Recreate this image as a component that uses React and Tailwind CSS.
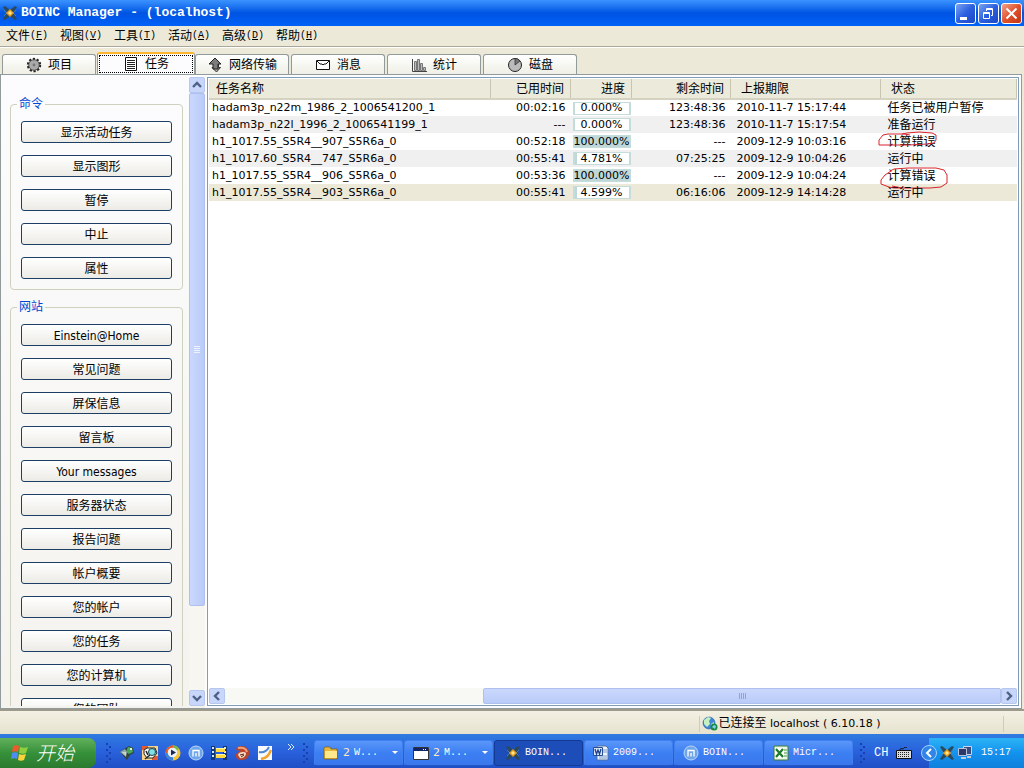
const menus = [
  ['文件', 'F'],
  ['视图', 'V'],
  ['工具', 'T'],
  ['活动', 'A'],
  ['高级', 'D'],
  ['帮助', 'H'],
]

const commands = ['显示活动任务', '显示图形', '暂停', '中止', '属性']

const websites = [
  'Einstein@Home',
  '常见问题',
  '屏保信息',
  '留言板',
  'Your messages',
  '服务器状态',
  '报告问题',
  '帐户概要',
  '您的帐户',
  '您的任务',
  '您的计算机',
  '您的团队',
]

const tasks = [
  { name: 'hadam3p_n22m_1986_2_1006541200_1', elapsed: '00:02:16', progress: '0.000%', left: '123:48:36', deadline: '2010-11-7 15:17:44', status: '任务已被用户暂停' },
  { name: 'hadam3p_n22l_1996_2_1006541199_1', elapsed: '---', progress: '0.000%', left: '123:48:36', deadline: '2010-11-7 15:17:54', status: '准备运行' },
  { name: 'h1_1017.55_S5R4__907_S5R6a_0', elapsed: '00:52:18', progress: '100.000%', left: '---', deadline: '2009-12-9 10:03:16', status: '计算错误', mark: 'first' },
  { name: 'h1_1017.60_S5R4__747_S5R6a_0', elapsed: '00:55:41', progress: '4.781%', left: '07:25:25', deadline: '2009-12-9 10:04:26', status: '运行中' },
  { name: 'h1_1017.55_S5R4__906_S5R6a_0', elapsed: '00:53:36', progress: '100.000%', left: '---', deadline: '2009-12-9 10:04:24', status: '计算错误', mark: 'second' },
  { name: 'h1_1017.55_S5R4__903_S5R6a_0', elapsed: '00:55:41', progress: '4.599%', left: '06:16:06', deadline: '2009-12-9 14:14:28', status: '运行中', selected: true },
]

function BoincIcon({ className = '' }) {
  return (
    <svg viewBox="0 0 16 16" className={`h-4 w-4 shrink-0 ${className}`} aria-hidden="true">
      <path d="M1 2l2-1 5 4 5-4 2 1-4 6 4 6-2 1-5-4-5 4-2-1 4-6z" fill="#2b4a5e" />
      <path d="M2 5l3 3-3 3M14 5l-3 3 3 3" fill="none" stroke="#4e7ca6" />
      <path d="M8 4l4 4-4 4-4-4z" fill="#e49a1c" />
      <path d="M8 6l2 2-2 2-2-2z" fill="#ffe88a" />
    </svg>
  )
}

function GearIcon() {
  return (
    <svg viewBox="0 0 16 16" className="h-4 w-4" aria-hidden="true">
      <circle cx="8" cy="8" r="6.2" fill="none" stroke="#222" strokeWidth="2" strokeDasharray="2.2 1.7" />
      <circle cx="8" cy="8" r="5.3" fill="#aaa" stroke="#333" strokeWidth="0.8" />
      <circle cx="8" cy="8" r="1.4" fill="#777" />
    </svg>
  )
}

function ListIcon() {
  return (
    <svg viewBox="0 0 16 16" className="h-4 w-4" aria-hidden="true">
      <path d="M2.5 1.5h11v13h-11z" fill="#fff" stroke="#111" />
      <path d="M4 4.5h8M4 6.5h8M4 8.5h8M4 10.5h8M4 12.5h8" stroke="#222" />
    </svg>
  )
}

function TransferIcon() {
  return (
    <svg viewBox="0 0 16 16" className="h-4 w-4" aria-hidden="true">
      <path d="M6.5 4.500h5v6h2L9.500 15 5 10.500h1.500z" fill="#b5b5b5" stroke="#333" />
      <path d="M8 1l6 6h-3v5H6V7H2z" fill="#7c7c7c" stroke="#222" />
    </svg>
  )
}

function MailIcon() {
  return (
    <svg viewBox="0 0 16 16" className="h-4 w-4" aria-hidden="true">
      <path d="M1.500 3.500h13v9h-13z" fill="#fff" stroke="#111" />
      <path d="M2 4l3 3h2l1 1 1-1h2l3-3" fill="none" stroke="#111" />
    </svg>
  )
}

function ChartIcon() {
  return (
    <svg viewBox="0 0 16 16" className="h-4 w-4" aria-hidden="true">
      <path d="M3.500 4.500h2v9h-2zM6.500 2.500h2v11h-2zM9.500 6.500h2v7h-2zM12.500 10.500h2v3h-2z" fill="#bbb" stroke="#777" />
      <path d="M1.500 2v12.500H16" fill="none" stroke="#444" />
    </svg>
  )
}

function DiskIcon() {
  return (
    <svg viewBox="0 0 16 16" className="h-4 w-4" aria-hidden="true">
      <circle cx="8" cy="8" r="6.500" fill="#bbb" stroke="#222" />
      <path d="M8 8V1.500a6.500 6.500 0 015 2.500z" fill="#777" stroke="#333" strokeWidth="0.8" />
    </svg>
  )
}

const tabs = [
  { label: '项目', Icon: GearIcon },
  { label: '任务', Icon: ListIcon, active: true },
  { label: '网络传输', Icon: TransferIcon },
  { label: '消息', Icon: MailIcon },
  { label: '统计', Icon: ChartIcon },
  { label: '磁盘', Icon: DiskIcon },
]

function TitleBar() {
  const base = 'grid h-[21px] w-[21px] place-items-center rounded-[3px] border border-white'
  return (
    <header className="flex h-[26px] shrink-0 items-center bg-linear-to-b from-[#3a93ff] via-[#0054e3] to-[#0061f8] px-0.5">
      <BoincIcon />
      <h1 className="ml-[3px] flex-1 truncate font-['Liberation_Mono','Noto_Sans_CJK_SC',monospace] text-[13px] font-bold text-white">
        BOINC Manager - (localhost)
      </h1>
      <div className="flex gap-[2px]">
        <button aria-label="最小化" className={`${base} bg-linear-to-br from-[#7ba2f0] via-[#2c5fe0] to-[#1c47c4]`}>
          <svg viewBox="0 0 19 19" className="h-[19px] w-[19px]"><path d="M4 13h7v3H4z" fill="#fff" /></svg>
        </button>
        <button aria-label="还原" className={`${base} bg-linear-to-br from-[#7ba2f0] via-[#2c5fe0] to-[#1c47c4]`}>
          <svg viewBox="0 0 19 19" className="h-[19px] w-[19px]" fill="none" stroke="#fff">
            <path d="M4.500 8.500h6v6h-6zM4 9.500h7M7.500 7V4.500h6v7H12M7 5.500h7" />
          </svg>
        </button>
        <button aria-label="关闭" className={`${base} bg-linear-to-br from-[#f0a088] via-[#e0512c] to-[#c3330f]`}>
          <svg viewBox="0 0 19 19" className="h-[19px] w-[19px]" stroke="#fff" strokeWidth="2"><path d="M4.500 4.500l10 10M14.500 4.500l-10 10" /></svg>
        </button>
      </div>
    </header>
  )
}

function MenuBar() {
  return (
    <nav className="flex h-[21px] shrink-0 items-center gap-3 border-b border-[#aca899] bg-[#ece9d8] pl-1.5">
      {menus.map(([label, key]) => (
        <button key={key} className="flex w-[42px] items-center whitespace-nowrap">
          {label}
          <span className="font-['Liberation_Mono',monospace] text-[10px]">
            (<u>{key}</u>)
          </span>
        </button>
      ))}
    </nav>
  )
}

function TabBar() {
  return (
    <div role="tablist" className="flex h-[27px] shrink-0 items-end border-t border-white bg-[#ece9d8] pl-0.5">
      {tabs.map(({ label, Icon, active }) =>
        active ? (
          <button key={label} role="tab" aria-selected="true" className="h-[22px] w-[98px] rounded-t-[3px] border-x border-t-2 border-x-[#919b9c] border-t-[#ffb732] bg-[#fcfcfe] px-px">
            <span className="flex h-[18px] items-center justify-center gap-1.5 border border-dotted border-black">
              <Icon />
              {label}
            </span>
          </button>
        ) : (
          <button key={label} role="tab" aria-selected="false" className="mr-0.5 flex h-5 w-[94px] items-center justify-center gap-1.5 rounded-t-[3px] border border-b-0 border-[#919b9c] bg-linear-to-b from-white to-[#efefe6] first:mr-px">
            <Icon />
            {label}
          </button>
        ),
      )}
    </div>
  )
}

function ActionGroup({ title, items }) {
  return (
    <fieldset className="rounded-[4px] border border-[#d0d0bf] px-2.5 pb-2.5">
      <legend className="-ml-1 h-3 text-[12px] leading-3 text-[#0046d5]">
        <span className="px-0.5">{title}</span>
      </legend>
      <div className="flex flex-col gap-3 pt-[11px]">
        {items.map((item) => (
          <button key={item} className="h-[22px] rounded-[3px] border border-[#1d3f66] bg-linear-to-b from-white to-[#ecebe6] pt-px text-center leading-5">
            {item}
          </button>
        ))}
      </div>
    </fieldset>
  )
}

function ScrollButton({ label, path }) {
  return (
    <button aria-label={label} className="grid h-4 w-4 shrink-0 place-items-center rounded-[2px] border border-[#b5c7ee] bg-[#c8d6fb]">
      <svg viewBox="0 0 12 12" className="h-3 w-3" fill="none" stroke="#4d6185" strokeWidth="2.4">
        <path d={path} />
      </svg>
    </button>
  )
}

function Sidebar() {
  return (
    <aside className="flex w-[204px] shrink-0 bg-linear-to-b from-[#fcfcfe] to-[#f4f3ee] py-0.5">
      <div className="flex min-h-0 flex-1 flex-col gap-[11px] overflow-hidden pt-[21px] pr-1.5 pl-[9px]">
        <ActionGroup title="命令" items={commands} />
        <ActionGroup title="网站" items={websites} />
      </div>
      <div className="flex w-4 flex-col bg-[#f7f6f1]">
        <ScrollButton label="向上滚动" path="M2 8l4-4 4 4" />
        <div className="flex flex-[513] flex-col items-center justify-center gap-px rounded-[2px] border border-[#aebff0] bg-linear-to-r from-[#cbd8fd] to-[#b9cbf8]">
          {[0, 1, 2, 3].map((n) => (
            <span key={n} className="h-px w-1.5 bg-[#eef4fe]" />
          ))}
        </div>
        <div className="flex-[84]" />
        <ScrollButton label="向下滚动" path="M2 4l4 4 4-4" />
      </div>
    </aside>
  )
}

function Mark({ kind }) {
  if (kind === 'first') {
    return (
      <svg viewBox="0 0 62 18" className="absolute -top-0.5 -left-1 h-[18px] w-[62px]" fill="none" stroke="#d8232a">
        <path d="M33 4L27 3H11L6 4L2 9V14H32L50 13L57 12L59 9V4L55 2L42 1L30 2L25 3" />
      </svg>
    )
  }
  return (
    <svg viewBox="0 0 70 24" className="absolute top-0 -left-px h-6 w-[70px]" fill="none" stroke="#d8232a">
      <path d="M11 4L5 8L1 13V17L9 20L14 21H50L61 20L67 16V8L64 3L56 1H28L14 2L10 4M12 19L22 21" />
    </svg>
  )
}

function Progress({ value }) {
  return (
    <div className="relative mr-px ml-0.5 h-[13px] border border-x-2 border-[#c5dcdc] bg-white">
      <div className="h-full bg-[#bfd7d7]" style={{ width: value }} />
      <span className="absolute -inset-x-1 inset-y-0 flex items-center justify-center">{value}</span>
    </div>
  )
}

function TaskTable() {
  const divider = 'border-r border-[#c7c5b2]'
  return (
    <table className="w-full table-fixed border-collapse whitespace-nowrap">
      <colgroup>
        <col />
        <col className="w-[80px]" />
        <col className="w-[61px]" />
        <col className="w-[99px]" />
        <col className="w-[150px]" />
        <col className="w-[136px]" />
      </colgroup>
      <thead>
        <tr className="h-5 border-b-2 border-[#d6d2c2] bg-[#ebeadb] text-left">
          <th className={`${divider} pl-[7px] font-normal`}>任务名称</th>
          <th className={`${divider} pr-1.5 text-right font-normal`}>已用时间</th>
          <th className={`${divider} pr-1.5 text-right font-normal`}>进度</th>
          <th className={`${divider} pr-1.5 text-right font-normal`}>剩余时间</th>
          <th className={`${divider} pl-2.5 font-normal`}>上报期限</th>
          <th className={`${divider} pl-2.5 font-normal`}>状态</th>
        </tr>
      </thead>
      <tbody className="font-['DejaVu_Sans','Noto_Sans_CJK_SC',sans-serif] text-[11px]">
        {tasks.map((task) => (
          <tr key={task.name} className={`h-[17px] ${task.selected ? 'bg-[#ece9d8]' : 'odd:bg-white even:bg-[#f0f0f0]'}`}>
            <td className="pl-[3px]">{task.name}</td>
            <td className="pr-[5px] text-right">{task.elapsed}</td>
            <td><Progress value={task.progress} /></td>
            <td className="pr-[5px] text-right">{task.left}</td>
            <td className="pl-1.5">{task.deadline}</td>
            <td className="relative pl-[7px] text-[12px]">
              {task.status}
              {task.mark && <Mark kind={task.mark} />}
            </td>
          </tr>
        ))}
      </tbody>
    </table>
  )
}

function TaskList() {
  return (
    <main className="m-0.5 flex min-w-0 flex-1 flex-col border border-[#7f9db9] bg-white p-px">
      <div className="min-h-0 flex-1 overflow-hidden">
        <TaskTable />
      </div>
      <div className="flex h-4 shrink-0 bg-[#f8f8f4]">
        <ScrollButton label="向左滚动" path="M8 2L4 6l4 4" />
        <div className="flex-[258]" />
        <div className="flex flex-[516] items-center justify-center gap-px rounded-[2px] border border-[#aebff0] bg-linear-to-b from-[#cbd8fd] to-[#b9cbf8]">
          {[0, 1, 2, 3].map((n) => (
            <span key={n} className="h-1.5 w-px bg-[#8ca4dc]" />
          ))}
        </div>
        <ScrollButton label="向右滚动" path="M4 2l4 4-4 4" />
      </div>
    </main>
  )
}

function StatusBar() {
  return (
    <footer className="flex h-[25px] shrink-0 items-center border-t-2 border-[#9d9a8c] bg-linear-to-b from-[#f3f1e4] to-[#e6e2cf] pt-0.5">
      <div className="flex-[700]" />
      <div className="flex h-4 flex-[302] items-center border-l border-[#d0ccba] pl-0.5">
        <svg viewBox="0 0 16 16" className="h-4 w-4" aria-hidden="true">
          <circle cx="7" cy="7" r="6" fill="#3f86d8" stroke="#1e5aa0" strokeWidth="0.6" />
          <path d="M2 4l4-3 3 1-2 3 1 3-3 3-3-3zM9 8l3-2v4l-3 2z" fill="#c5f0c0" />
          <circle cx="12" cy="11" r="3.500" fill="#1d8a3a" />
          <path d="M10 11l2-2 2 1-1 3z" fill="#7fd0ff" />
        </svg>
        <p className="pl-px">
          已连接至 <span className="font-['DejaVu_Sans',sans-serif] text-[11px]">localhost ( 6.10.18 )</span>
        </p>
      </div>
      <div className="h-4 w-[21px] border-l border-[#d0ccba]" />
    </footer>
  )
}

function MIcon() {
  return (
    <svg viewBox="0 0 16 16" className="h-4 w-4 shrink-0" aria-hidden="true">
      <circle cx="8" cy="8" r="7" fill="#6fa6ea" stroke="#b9d6fa" />
      <path d="M5 11.500V5.500h6v6M8 8v3.500" fill="none" stroke="#fff" strokeWidth="1.300" />
    </svg>
  )
}

const launchers = [
  {
    label: '显示桌面',
    art: (
      <>
        <path d="M1 7l4-3 5-3 4 2 1 5-4 2-3 5-3-3z" fill="#31463f" />
        <path d="M9 2l4 1 1 4-4 2-3-2z" fill="#4aa85c" />
        <path d="M1 7l5-3 2 3-1 5z" fill="#93aaaa" />
        <path d="M3 7l4 0 0 4z" fill="#c9d6d4" />
        <path d="M11 3h2v2h-2z" fill="#d9ffe0" />
      </>
    ),
  },
  {
    label: '图片查看器',
    art: (
      <>
        <path d="M0 1h16v14H0z" fill="#f7d489" />
        <path d="M0 1h6v4H0zM10 11h6v4h-6z" fill="#e05a32" />
        <path d="M2 5l3-2 8 0 2 5-4 5-6 0-3-4z" fill="#f7faf4" stroke="#222" />
        <circle cx="10" cy="7" r="3.500" fill="#7fe0e8" stroke="#1d4550" />
        <path d="M4 6l2 4M8 10l-5 4" stroke="#222" strokeWidth="1.500" />
      </>
    ),
  },
  {
    label: '媒体播放器',
    art: (
      <>
        <circle cx="8" cy="8" r="7.500" fill="#f7c531" />
        <path d="M8 .5A7.500 7.500 0 00.5 8H8z" fill="#e2582b" />
        <path d="M8 15.500A7.500 7.500 0 01.5 8H8z" fill="#3a84de" />
        <path d="M8 .5a7.500 7.500 0 016 3.500L8 8z" fill="#77bd45" />
        <circle cx="7.500" cy="7.500" r="4.800" fill="#eef3fb" />
        <path d="M6 4.500l5 3-5 3z" fill="#1a2b50" />
      </>
    ),
  },
  {
    label: '傲游',
    art: (
      <>
        <circle cx="8" cy="8" r="7" fill="#6fa6ea" stroke="#b9d6fa" />
        <path d="M5 11.500V5.500h6v6M8 8v3.500" fill="none" stroke="#fff" strokeWidth="1.300" />
      </>
    ),
  },
  {
    label: '影音',
    art: (
      <>
        <path d="M0 1h4v14H0zM12 1h4v14h-4z" fill="#10377c" />
        <path d="M1 2h2v2H1zM1 6h2v2H1zM1 10h2v2H1zM13 2h2v2h-2zM13 6h2v2h-2zM13 10h2v2h-2z" fill="#cfe7ff" />
        <path d="M5 3h9v4H5zM5 9h9v4H5z" fill="#ffd83d" />
        <path d="M5 3h9v1H5zM5 9h9v1H5z" fill="#fff6a8" />
      </>
    ),
  },
  {
    label: '刻录',
    art: (
      <>
        <path d="M3 2c5-2 10-1 12 4 1 5-2 9-7 9-4 0-7-2-6-6l4-3-4-1z" fill="#b9452d" />
        <path d="M4 10c0-3 6-4 8-2 0 3-3 6-6 5z" fill="#f6dcc2" />
        <path d="M4 3c4-1 8 0 9 4" fill="none" stroke="#f2a277" strokeWidth="2" />
        <path d="M6 10l4-1M7 12l3-2" stroke="#5c2017" />
      </>
    ),
  },
  {
    label: '编辑器',
    art: (
      <>
        <path d="M1 1h14v14H1z" fill="#f8fafc" />
        <path d="M2 7c5 1 8-1 10-5" fill="none" stroke="#4e87cf" strokeWidth="2" />
        <path d="M4 14c6-1 8-4 10-9" fill="none" stroke="#f1a32c" strokeWidth="2.500" />
      </>
    ),
  },
]

function FolderIcon() {
  return (
    <svg viewBox="0 0 16 16" className="h-4 w-4 shrink-0" aria-hidden="true">
      <path d="M1 3l1-1h5l1 2h6v10H1z" fill="#e7b83c" stroke="#7c5a10" strokeWidth="0.7" />
      <path d="M2 6h12v7H2z" fill="#ffe88c" />
    </svg>
  )
}

function WindowIcon() {
  return (
    <svg viewBox="0 0 16 16" className="h-4 w-4 shrink-0" aria-hidden="true">
      <path d="M.5 2.500h15v12H.5z" fill="#fff" stroke="#333" />
      <path d="M1 3h14v3H1z" fill="#10246a" />
      <path d="M10 4h1v1h-1zM12 4h1v1h-1z" fill="#fff" />
    </svg>
  )
}

function WordIcon() {
  return (
    <svg viewBox="0 0 16 16" className="h-4 w-4 shrink-0" aria-hidden="true">
      <path d="M4 1h9l2 2v12H4z" fill="#eaf2fd" stroke="#52719f" />
      <path d="M9 5h5M9 7h5M6 11h8M6 13h8" stroke="#7f9cc8" />
      <path d="M.5 2.500h9v8h-9z" fill="#dce9fa" stroke="#274f91" />
      <path d="M2 4l1.500 5L5 5l1.500 4L8 4" fill="none" stroke="#1c3f86" strokeWidth="1.300" />
    </svg>
  )
}

function ExcelIcon() {
  return (
    <svg viewBox="0 0 16 16" className="h-4 w-4 shrink-0" aria-hidden="true">
      <path d="M1 1h14v14H1z" fill="#e9f5e5" stroke="#3f7a3a" />
      <path d="M11 5h3M11 8h3M11 11h3" stroke="#4f9a49" />
      <path d="M2 3h9v10H2z" fill="#fff" />
      <path d="M3 4l7 8M10 4l-7 8" stroke="#1f7a2b" strokeWidth="2.200" />
    </svg>
  )
}

const windows = [
  { label: 'W...', count: 2, Icon: FolderIcon },
  { label: 'M...', count: 2, Icon: WindowIcon },
  { label: 'BOIN...', Icon: BoincIcon, active: true },
  { label: '2009...', Icon: WordIcon },
  { label: 'BOIN...', Icon: MIcon },
  { label: 'Micr...', Icon: ExcelIcon },
]

function Grip() {
  return (
    <svg viewBox="0 0 6 22" className="h-[22px] w-1.5 shrink-0" fill="#173fae" aria-hidden="true">
      <path d="M0 1h2v2H0zM3 4h2v2H3zM0 7h2v2H0zM3 10h2v2H3zM0 13h2v2H0zM3 16h2v2H3zM0 19h2v2H0z" />
    </svg>
  )
}

function Taskbar() {
  return (
    <div className="flex h-[34px] shrink-0 items-end bg-linear-to-b from-[#2f7be0] via-[#2a62dd] to-[#1f4fc6] font-['Liberation_Mono','Noto_Sans_CJK_SC',monospace] text-[10px] text-white">
      <button className="flex h-[30px] w-24 shrink-0 items-center gap-1.5 rounded-r-lg bg-linear-to-b from-[#62b05c] via-[#36913a] to-[#2b7a2e] pl-2.5">
        <svg viewBox="0 0 20 18" className="h-[18px] w-5" aria-hidden="true">
          <path d="M3 2c3-1 4-1 6 0L8 8C6 7 4 7 2 8z" fill="#f0592b" />
          <path d="M10 3c3 1 5 1 8 0l-2 6c-2 1-4 1-7 0z" fill="#8dcf3f" />
          <path d="M2 9c2-1 4-1 6 0l-1 6c-2-1-4-1-6 0z" fill="#4f8df5" />
          <path d="M9 10c2 1 4 1 7 0l-2 6c-2 1-4 1-6 0z" fill="#fbd33b" />
        </svg>
        <span className="pb-0.5 font-['Noto_Sans_CJK_SC',sans-serif] text-[19px] leading-6 font-light italic">开始</span>
      </button>
      <div className="flex h-[30px] w-[218px] shrink-0 items-center pl-2.5">
        <Grip />
        <div className="ml-[7px] flex gap-[7px]">
          {launchers.map(({ label, art }) => (
            <button key={label} aria-label={label}>
              <svg viewBox="0 0 16 16" className="h-4 w-4">{art}</svg>
            </button>
          ))}
        </div>
        <svg viewBox="0 0 8 8" className="mb-3 ml-3.5 h-2 w-2 shrink-0" fill="none" stroke="#dce8ff"><path d="M1 1l3 3-3 3M4 1l3 3-3 3" /></svg>
        <div className="ml-2"><Grip /></div>
      </div>
      <div className="flex h-[30px] min-w-0 flex-1 items-center gap-px">
        {windows.map(({ label, count, Icon, active }, index) => (
          <button
            key={index}
            className={`flex h-[26px] max-w-[160px] min-w-0 flex-1 items-center gap-1 rounded-[3px] border pl-2 text-left ${active ? 'border-[#143a94] bg-[#1c4db8]' : 'border-[#3f7ff0] border-b-[#2457c4] bg-linear-to-b from-[#5a96fa] via-[#3c7ff2] to-[#3a78ec]'}`}
          >
            <Icon className={active ? 'ml-0.5' : ''} />
            {count && <span className="font-['DejaVu_Sans',sans-serif] text-[11px] text-[#ffe9bd]">{count}</span>}
            <span className="flex-1 truncate">{label}</span>
            {count && <svg viewBox="0 0 6 4" className="mr-1 h-1 w-1.5"><path d="M0 0h6L3 3z" fill="#fff" /></svg>}
          </button>
        ))}
      </div>
      <div className="flex h-[30px] w-[76px] shrink-0 items-center pl-[7px]">
        <Grip />
        <span className="ml-2 text-[12px]">CH</span>
        <svg viewBox="0 0 16 12" className="ml-2 h-3 w-4" aria-hidden="true">
          <path d="M4 3c0-3 3 0 4-2s3 0 3-1" fill="none" stroke="#111" />
          <path d="M.5 3.500h15v8H.5z" fill="#ddd" stroke="#111" />
          <path d="M2 5.500h12M2 7.500h12M2 9.500h12" stroke="#222" strokeDasharray="1 1" />
        </svg>
      </div>
      <div className="flex h-[30px] w-[95px] shrink-0 items-center bg-linear-to-b from-[#2db3f5] via-[#1292ee] to-[#1080dc]">
        <button aria-label="显示隐藏的图标" className="-ml-2">
          <svg viewBox="0 0 16 16" className="h-4 w-4">
            <circle cx="8" cy="8" r="7.500" fill="#2f86e8" stroke="#a5d4fa" />
            <path d="M10 4L6 8l4 4" fill="none" stroke="#fff" strokeWidth="2" />
          </svg>
        </button>
        <BoincIcon className="ml-0.5" />
        <svg viewBox="0 0 16 16" className="ml-0.5 h-4 w-4" aria-hidden="true">
          <path d="M6.500 1.500h8v8h-8z" fill="#3c4a7c" stroke="#cbd4ea" />
          <path d="M1.500 3.500h8v7h-8z" fill="#2c3868" stroke="#b8c2dd" />
          <path d="M4 13h5M10 12h4" stroke="#c5cbe0" strokeWidth="2" fill="none" />
        </svg>
        <time className="ml-2">15:17</time>
      </div>
    </div>
  )
}

function App() {
  return (
    <div className="flex h-screen flex-col overflow-hidden bg-[#ece9d8] font-['DejaVu_Sans_Condensed','DejaVu_Sans','Noto_Sans_CJK_SC',sans-serif] text-[12px] leading-4 text-black">
      <TitleBar />
      <MenuBar />
      <TabBar />
      <div className="mr-0.5 flex min-h-0 flex-1 border border-[#919b9c] bg-[#fcfcfe]">
        <Sidebar />
        <TaskList />
      </div>
      <StatusBar />
      <Taskbar />
    </div>
  )
}

export default App
